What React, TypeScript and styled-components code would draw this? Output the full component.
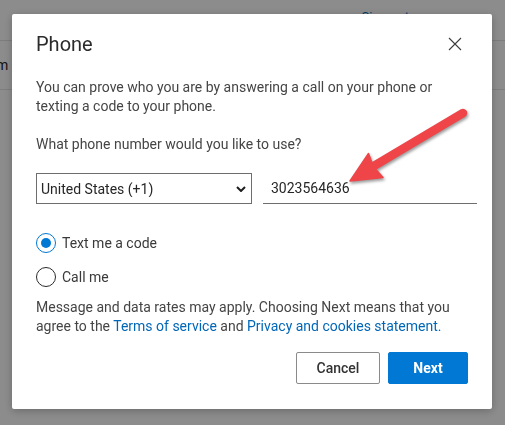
import { useState } from "react";
import styled, { createGlobalStyle } from "styled-components";

const GlobalStyle = createGlobalStyle`
  html, body {
    margin: 0;
    padding: 0;
  }
  body {
    background: #ffffff;
    font-family: Roboto, "Noto Sans", Arial, sans-serif;
    color: #404040;
  }
`;

export default () => {
  const [method, setMethod] = useState("text");

  return (
    <>
      <GlobalStyle />
      <Page>
        <TopBar>
          <SignLink>Sign out</SignLink>
        </TopBar>
        <NavRow>
          <NavText>m</NavText>
        </NavRow>
      </Page>
      <Backdrop />
      <Dialog role="dialog" aria-labelledby="phone-title">
        <Header>
          <Title id="phone-title">Phone</Title>
          <CloseButton aria-label="Close">
            <svg width="14" height="14" viewBox="0 0 14 14">
              <path d="M1 1L13 13M13 1L1 13" stroke="#3c3c3c" strokeWidth="1.1" fill="none" />
            </svg>
          </CloseButton>
        </Header>

        <Text mt="20px">
          You can prove who you are by answering a call on your phone or texting a code to your phone.
        </Text>
        <Text mt="19px">What phone number would you like to use?</Text>

        <PhoneRow>
          <SelectBox>
            <Select defaultValue="us">
              <option value="us">United States (+1)</option>
            </Select>
            <Chevron width="10" height="6" viewBox="0 0 10 6">
              <path d="M1 1L5 5L9 1" stroke="#1e1e1e" strokeWidth="2" fill="none" />
            </Chevron>
          </SelectBox>
          <PhoneInput defaultValue="3023564636" />
        </PhoneRow>

        <Options>
          <RadioRow onClick={() => setMethod("text")}>
            <Radio checked={method === "text"} />
            <span>Text me a code</span>
          </RadioRow>
          <RadioRow onClick={() => setMethod("call")}>
            <Radio checked={method === "call"} />
            <span>Call me</span>
          </RadioRow>
        </Options>

        <Text mt="11px">
          Message and data rates may apply. Choosing Next means that you agree to the{" "}
          <Link href="#">Terms of service</Link> and <Link href="#">Privacy and cookies statement.</Link>
        </Text>

        <Footer>
          <Button>Cancel</Button>
          <Button primary>Next</Button>
        </Footer>
      </Dialog>

      <Annotation viewBox="0 0 505 425" width="505" height="425">
        <g fill="#ef4549" stroke="#ef4549">
          <path d="M463 113L373 166.5" strokeWidth="8.5" strokeLinecap="round" />
          <path d="M350 181L368.5 153.5L373.5 166.8L383 177.5Z" strokeWidth="1.5" strokeLinejoin="round" />
        </g>
      </Annotation>
    </>
  );
};

const Page = styled.div`
  height: 425px;
  background: #ffffff;
`;

const TopBar = styled.div`
  height: 40px;
  border-bottom: 1px solid #e4e4e4;
  display: flex;
  justify-content: flex-end;
  padding-right: 96px;
`;

const SignLink = styled.span`
  padding-top: 9px;
  font-size: 13px;
  color: #0067b8;
`;

const NavRow = styled.div`
  height: 48px;
  border-bottom: 1px solid #e4e4e4;
  display: flex;
  align-items: center;
`;

const NavText = styled.span`
  margin-left: -4px;
  font-size: 14px;
  color: #262626;
`;

const Backdrop = styled.div`
  position: fixed;
  inset: 0;
  background: rgba(0, 0, 0, 0.45);
`;

const Dialog = styled.div`
  position: fixed;
  top: 14px;
  left: 12px;
  width: 480px;
  height: 395px;
  box-sizing: border-box;
  padding: 16px 15px 0 24px;
  background: #ffffff;
  border-radius: 2px;
  box-shadow: 0 2px 8px rgba(0, 0, 0, 0.25);
  display: flex;
  flex-direction: column;
`;

const Header = styled.div`
  display: flex;
  align-items: center;
  justify-content: space-between;
  height: 28px;
`;

const Title = styled.h2`
  margin: 0;
  font-size: 20px;
  line-height: 28px;
  font-weight: 400;
  color: #2b2b2b;
`;

const CloseButton = styled.button`
  width: 20px;
  height: 20px;
  margin-right: 12px;
  padding: 0;
  border: 0;
  background: none;
  display: flex;
  align-items: center;
  justify-content: center;
`;

const Text = styled.p<{ mt: string }>`
  margin: ${(p) => p.mt} 0 0;
  font-size: 14px;
  line-height: 19px;
  color: #454545;
`;

const Link = styled.a`
  color: #0067b8;
  text-decoration: none;
`;

const PhoneRow = styled.div`
  margin-top: 19px;
  display: grid;
  grid-template-columns: 216px 1fr;
  column-gap: 11px;
`;

const SelectBox = styled.div`
  position: relative;
  height: 31px;
`;

const Select = styled.select`
  appearance: none;
  width: 100%;
  height: 100%;
  box-sizing: border-box;
  margin: 0;
  padding: 0 24px 0 4px;
  border: 1px solid #6e6e6e;
  border-radius: 0;
  background: #ffffff;
  font-family: inherit;
  font-size: 14px;
  color: #262626;
`;

const Chevron = styled.svg`
  position: absolute;
  right: 6px;
  top: 13px;
  pointer-events: none;
`;

const PhoneInput = styled.input`
  height: 31px;
  box-sizing: border-box;
  margin: 0;
  padding: 0 8px;
  border: 0;
  border-bottom: 1px solid #6e6e6e;
  outline: none;
  font-family: inherit;
  font-size: 14px;
  color: #262626;
`;

const Options = styled.div`
  margin-top: 29px;
  display: flex;
  flex-direction: column;
  gap: 14px;
`;

const RadioRow = styled.label`
  display: flex;
  align-items: center;
  gap: 6px;
  height: 20px;
  font-size: 14px;
  color: #3a3a3a;
  cursor: pointer;
`;

const Radio = styled.span<{ checked: boolean }>`
  width: 20px;
  height: 20px;
  box-sizing: border-box;
  border-radius: 50%;
  border: 1px solid ${(p) => (p.checked ? "#0078d4" : "#2b2b2b")};
  display: flex;
  align-items: center;
  justify-content: center;

  &::after {
    content: "";
    width: 10px;
    height: 10px;
    border-radius: 50%;
    background: ${(p) => (p.checked ? "#0078d4" : "transparent")};
  }
`;

const Footer = styled.div`
  margin-top: 16px;
  padding-right: 9px;
  display: flex;
  justify-content: flex-end;
  gap: 8px;
`;

const Button = styled.button<{ primary?: boolean }>`
  height: 32px;
  min-width: ${(p) => (p.primary ? "80px" : "84px")};
  box-sizing: border-box;
  border-radius: 2px;
  border: 1px solid ${(p) => (p.primary ? "#0078d4" : "#8a8a8a")};
  background: ${(p) => (p.primary ? "#0078d4" : "#ffffff")};
  color: ${(p) => (p.primary ? "#ffffff" : "#333333")};
  font-family: inherit;
  font-size: 14px;
  font-weight: ${(p) => (p.primary ? 700 : 500)};
`;

const Annotation = styled.svg`
  position: fixed;
  left: 0;
  top: 0;
  pointer-events: none;
  filter: drop-shadow(1px 2px 1.5px rgba(0, 0, 0, 0.4));
`;
